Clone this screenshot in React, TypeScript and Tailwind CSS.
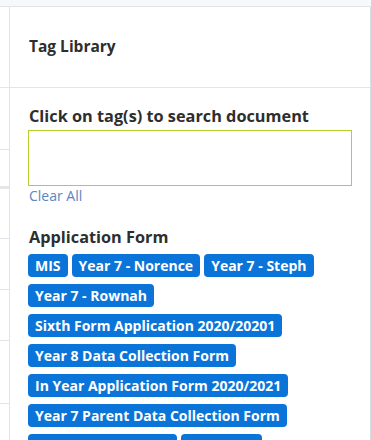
const tags = [
  'MIS',
  'Year 7 - Norence',
  'Year 7 - Steph',
  'Year 7 - Rownah',
  'Sixth Form Application 2020/20201',
  'Year 8 Data Collection Form',
  'In Year Application Form 2020/2021',
  'Year 7 Parent Data Collection Form',
  'Year 9 Option Form',
  'Transfers',
];

function Tag({ label }: { label: string }) {
  return (
    <button
      type="button"
      className="h-[23px] px-[7px] rounded-[4px] bg-[#0b74d8] text-white text-[14px] font-bold leading-[23px] whitespace-nowrap"
    >
      {label}
    </button>
  );
}

export default function App() {
  return (
    <div
      className="h-[440px] w-[371px] overflow-hidden bg-white flex flex-col"
      style={{ fontFamily: '"Open Sans", Lato, sans-serif' }}
    >
      <div className="h-[7px] shrink-0 bg-[#f6f8fa] border-b border-[#dfe5ea]" />
      <div className="flex flex-1 min-h-0">
        {/* collapsed side column */}
        <div className="w-[10px] shrink-0 border-r border-[#dfe5ea] flex flex-col">
          <div className="h-[81px] border-b border-[#dfe5ea]" />
          <div className="h-[62px] border-b border-[#dfe5ea]" />
          <div className="h-[36px]" />
          <div className="h-[3px] bg-[#e4e6e8]" />
          <div className="h-[50px] border-b border-[#dfe5ea]" />
          <div className="h-[51px] border-b border-[#dfe5ea]" />
          <div className="h-[51px] border-b border-[#dfe5ea]" />
          <div className="h-[63px] border-b border-[#dfe5ea]" />
        </div>

        <div className="flex-1 border-r border-[#d6dde3] flex flex-col">
          <div className="h-[81px] shrink-0 border-b border-[#dfe5ea] flex items-center px-[19px]">
            <h2 className="text-[15.5px] font-bold text-[#2e2e2e]">Tag Library</h2>
          </div>

          <div className="px-[18px] pt-[18px]">
            <p className="text-[16.3px] font-bold text-[#2e2e2e] leading-[20px] pl-[1px]">
              Click on tag(s) to search document
            </p>
            <div className="mt-[4px] h-[56px] w-[324px] border border-[#b1cf2f] bg-white" />
            <button type="button" className="block mt-[1px] text-[14px] leading-[18px] text-[#5a86c0] pl-[1px]">
              Clear All
            </button>

            <h3 className="mt-[22px] text-[16.3px] font-bold text-[#2e2e2e] leading-[20px] pl-[1px]">
              Application Form
            </h3>
            <div className="mt-[7px] flex flex-wrap gap-x-[4px] gap-y-[7px] pr-[10px]">
              {tags.map((t) => (
                <Tag key={t} label={t} />
              ))}
            </div>
          </div>
        </div>
      </div>
    </div>
  );
}
